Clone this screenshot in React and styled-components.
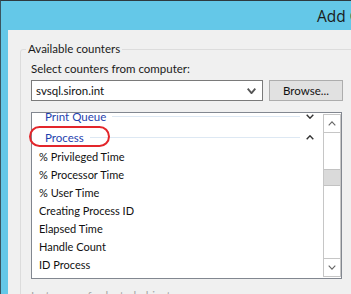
import React from "react";
import styled, { createGlobalStyle } from "styled-components";

const Global = createGlobalStyle`
  html, body { margin: 0; padding: 0; background: #f0f0f0; }
  body { font-family: Lato, "Open Sans", sans-serif; }
`;

const Frame = styled.div`
  width: 351px;
  height: 294px;
  overflow: hidden;
  box-sizing: border-box;
  border-top: 1px solid #2e3a40;
  border-left: 1px solid #3a5560;
  background: #64c8e8;
  display: flex;
  flex-direction: column;
`;

const TitleBar = styled.div`
  height: 29px;
  flex: none;
  display: flex;
  align-items: center;
  padding-left: 316px;
  white-space: nowrap;
  font-family: "Open Sans", sans-serif;
  font-size: 15.5px;
  color: #1b1b1b;
  font-weight: 400;
`;

const Body = styled.div`
  flex: 1;
  margin-left: 7px;
  background: #f0f0f0;
  overflow: hidden;
  padding: 11px 0 0 12px;
  font-size: 11px;
  color: #000;
`;

const Group = styled.fieldset`
  margin: 0;
  width: 360px;
  border: 1px solid #dcdcdc;
  border-radius: 3px;
  padding: 4px 10px 0 10px;
`;

const Legend = styled.legend`
  margin-left: -5px;
  padding: 0 2px;
  line-height: 16px;
  font-size: 11.5px;
  color: #1a1a1a;
`;

const Label = styled.div`
  line-height: 16px;
  margin-bottom: 3px;
  white-space: nowrap;
  font-size: 11.5px;
  color: ${(p) => (p.$disabled ? "#a6a6a6" : "#1a1a1a")};
  margin-top: ${(p) => p.$top || 0}px;
`;

const Row = styled.div`
  display: flex;
  gap: 6px;
`;

const Combo = styled.div`
  width: 232px;
  height: 21px;
  box-sizing: border-box;
  border: 1px solid #7a7a7a;
  background: #fff;
  display: flex;
  align-items: center;
  padding: 0 6px 0 4px;
  font-size: 11.5px;
  color: #111;
`;

const ComboText = styled.span`
  flex: 1;
`;

const Button = styled.div`
  width: 74px;
  height: 21px;
  box-sizing: border-box;
  border: 1px solid #adadad;
  background: #e1e1e1;
  display: flex;
  align-items: center;
  justify-content: center;
  font-size: 11.5px;
  color: #111;
`;

const ListWrap = styled.div`
  position: relative;
  margin-top: 11px;
  width: 311px;
`;

const ListBox = styled.div`
  height: 167px;
  box-sizing: border-box;
  border: 1px solid #828790;
  background: #fff;
  display: flex;
  overflow: hidden;
`;

const Items = styled.div`
  flex: 1;
  overflow: hidden;
`;

const ScrollOffset = styled.div`
  margin-top: -7px;
`;

const Scroll = styled.div`
  margin-top: 1px;
  margin-bottom: 1px;
  display: flex;
  flex-direction: column;
`;

const Header = styled.div`
  height: 21px;
  display: flex;
  align-items: center;
  padding-left: 13px;
  font-size: 11.5px;
  color: #1f3fae;
`;

const HeaderLine = styled.div`
  flex: 1;
  height: 1px;
  background: #dde8f3;
  margin-left: 6px;
`;

const HeaderChevron = styled.div`
  width: 16px;
  margin: 0 5px 0 2px;
  display: flex;
  justify-content: center;
`;

const Item = styled.div`
  height: 18px;
  line-height: 18px;
  padding-left: 7px;
  color: #111;
  white-space: nowrap;
`;

const ScrollBar = styled.div`
  width: 18px;
  height: 100%;
  box-sizing: border-box;
  border: 1px solid #c6c6c6;
  display: flex;
  flex-direction: column;
  background: #fff;
`;

const ScrollBtn = styled.div`
  height: 17px;
  flex: none;
  display: flex;
  align-items: center;
  justify-content: center;
  border-bottom: ${(p) => (p.$up ? "1px solid #c6c6c6" : "none")};
  border-top: ${(p) => (p.$up ? "none" : "1px solid #c6c6c6")};
`;

const Track = styled.div`
  flex: 1;
`;

const Thumb = styled.div`
  height: 17px;
  box-sizing: border-box;
  background: #dadada;
  border-top: 1px solid #c2c2c2;
  border-bottom: 1px solid #c2c2c2;
`;

const Highlight = styled.div`
  position: absolute;
  left: -2px;
  top: 14px;
  width: 81px;
  height: 21px;
  box-sizing: border-box;
  border: 2px solid #e3262b;
  border-radius: 11px;
  pointer-events: none;
`;

const Chevron = ({ up, color = "#333", w = 8, h = 5, sw = 1.4 }) => (
  <svg width={w} height={h} viewBox={`0 0 ${w} ${h}`}>
    <polyline
      points={
        up
          ? `0.7,${h - 0.7} ${w / 2},0.8 ${w - 0.7},${h - 0.7}`
          : `0.7,0.7 ${w / 2},${h - 0.8} ${w - 0.7},0.7`
      }
      fill="none"
      stroke={color}
      strokeWidth={sw}
    />
  </svg>
);

const items = [
  "% Privileged Time",
  "% Processor Time",
  "% User Time",
  "Creating Process ID",
  "Elapsed Time",
  "Handle Count",
  "ID Process",
  "IO Data Bytes/sec",
];

export default function App() {
  return (
    <>
      <Global />
      <Frame>
        <TitleBar>Add Counters</TitleBar>
        <Body>
          <Group>
            <Legend>Available counters</Legend>
            <Label>Select counters from computer:</Label>
            <Row>
              <Combo>
                <ComboText>svsql.siron.int</ComboText>
                <Chevron color="#555" w={9} h={6} sw={1.8} />
              </Combo>
              <Button>Browse...</Button>
            </Row>
            <ListWrap>
              <ListBox>
                <Items>
                  <ScrollOffset>
                    <Header>
                      Print Queue
                      <HeaderLine />
                      <HeaderChevron>
                        <Chevron />
                      </HeaderChevron>
                    </Header>
                    <Header>
                      Process
                      <HeaderLine />
                      <HeaderChevron>
                        <Chevron up />
                      </HeaderChevron>
                    </Header>
                    {items.map((t) => (
                      <Item key={t}>{t}</Item>
                    ))}
                  </ScrollOffset>
                </Items>
                <Scroll>
                  <ScrollBar>
                    <ScrollBtn $up>
                      <Chevron up color="#666" w={8} h={5} sw={1.1} />
                    </ScrollBtn>
                    <Track>
                      <Thumb style={{ marginTop: 36 }} />
                    </Track>
                    <ScrollBtn>
                      <Chevron color="#666" w={8} h={5} sw={1.1} />
                    </ScrollBtn>
                  </ScrollBar>
                </Scroll>
              </ListBox>
              <Highlight />
            </ListWrap>
            <Label $disabled $top={9}>Instances of selected object:</Label>
          </Group>
        </Body>
      </Frame>
    </>
  );
}
